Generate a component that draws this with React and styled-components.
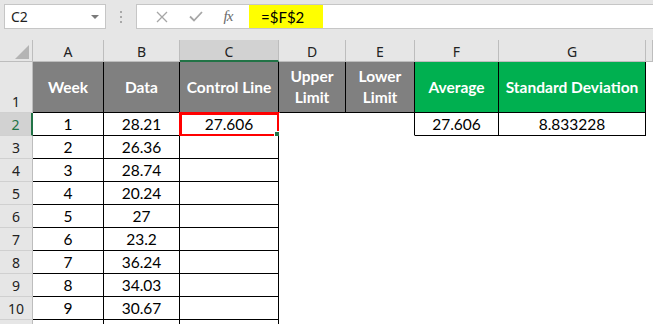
import React from "react";
import styled, { createGlobalStyle } from "styled-components";

const GlobalStyle = createGlobalStyle`
  html, body { margin: 0; padding: 0; background: #ffffff; overflow: hidden; }
  body { width: 653px; height: 324px; font-family: "Lato", "Liberation Sans", sans-serif; }
  * { box-sizing: border-box; }
`;

const COLS = ["A", "B", "C", "D", "E", "F", "G"];
const WIDTHS = "33px 71px 76px 99px 67px 69px 84px 147px 1fr";

const HEADERS = ["Week", "Data", "Control Line", "Upper Limit", "Lower Limit", "Average", "Standard Deviation"];
const WEEKS = [
  ["1", "28.21"],
  ["2", "26.36"],
  ["3", "28.74"],
  ["4", "20.24"],
  ["5", "27"],
  ["6", "23.2"],
  ["7", "36.24"],
  ["8", "34.03"],
  ["9", "30.67"],
  ["", ""],
];

const Page = styled.div`
  width: 653px;
  height: 324px;
  overflow: hidden;
  background: #e6e6e6;
`;

const FormulaBar = styled.div`
  display: flex;
  align-items: flex-start;
  height: 40px;
  padding: 4px 0 0 4px;
`;

const NameBox = styled.div`
  position: relative;
  width: 102px;
  height: 25px;
  background: #fff;
  border: 1px solid #c6c6c6;
  font-family: "Noto Sans", "Open Sans", sans-serif;
  font-size: 14px;
  color: #222;
  padding-left: 6px;
  display: flex;
  align-items: center;
`;

const DropArrow = styled.span`
  position: absolute;
  right: 6px;
  top: 10px;
  width: 0;
  height: 0;
  border-left: 4px solid transparent;
  border-right: 4px solid transparent;
  border-top: 4px solid #7a7a7a;
`;

const Grip = styled.div`
  width: 30px;
  height: 25px;
  display: flex;
  flex-direction: column;
  align-items: center;
  justify-content: center;
  gap: 3px;
  span {
    width: 2px;
    height: 2px;
    background: #a8a8a8;
  }
`;

const ButtonsBox = styled.div`
  width: 113px;
  height: 25px;
  background: #fff;
  border: 1px solid #c6c6c6;
  border-right: none;
  display: flex;
  align-items: center;
  justify-content: space-around;
  padding: 0 6px 0 8px;
`;

const Fx = styled.span`
  font-family: "Liberation Serif", serif;
  font-style: italic;
  font-size: 15px;
  color: #6a6a6a;
  letter-spacing: -1px;
`;

const Highlight = styled.div`
  width: 74px;
  height: 25px;
  background: #ffff00;
  border-top: 1px solid #c6c6c6;
  border-bottom: 1px solid #c6c6c6;
  font-family: "Lato", sans-serif;
  font-size: 15px;
  color: #000;
  padding-left: 12px;
  display: flex;
  align-items: center;
`;

const Input = styled.div`
  flex: 1;
  height: 25px;
  background: #fff;
  border-top: 1px solid #c6c6c6;
  border-bottom: 1px solid #c6c6c6;
`;

const Sheet = styled.div`
  display: grid;
  grid-template-columns: ${WIDTHS};
  grid-template-rows: 22px 51px repeat(10, 23px);
`;

const Corner = styled.div`
  background: #e6e6e6;
  border-right: 1px solid #bdbdbd;
  border-bottom: 1px solid #bdbdbd;
  display: flex;
  align-items: flex-end;
  justify-content: flex-end;
  padding: 0 3px 2px 0;
`;

const ColHead = styled.div`
  background: ${({ $active }) => ($active ? "#d2d2d2" : "#e6e6e6")};
  border-right: 1px solid #bdbdbd;
  border-bottom: ${({ $active }) => ($active ? "2px solid #217346" : "1px solid #bdbdbd")};
  font-family: "Noto Sans", "Open Sans", sans-serif;
  font-size: 14px;
  color: #222;
  display: flex;
  align-items: center;
  justify-content: center;
  padding-top: 2px;
`;

const RowHead = styled.div`
  background: ${({ $active }) => ($active ? "#d2d2d2" : "#e6e6e6")};
  border-right: ${({ $active }) => ($active ? "2px solid #217346" : "1px solid #bdbdbd")};
  border-bottom: 1px solid #d0d0d0;
  font-family: "Noto Sans", "Open Sans", sans-serif;
  font-size: 14px;
  color: ${({ $active }) => ($active ? "#217346" : "#222")};
  display: flex;
  align-items: ${({ $bottom }) => ($bottom ? "flex-end" : "center")};
  justify-content: center;
  padding-bottom: ${({ $bottom }) => ($bottom ? "1px" : "0")};
`;

const Cell = styled.div`
  position: relative;
  background: ${({ $bg }) => $bg || "#fff"};
  border-right: 1px solid ${({ $r }) => ($r ? "#000" : "transparent")};
  border-bottom: 1px solid ${({ $b }) => ($b ? "#000" : "transparent")};
  color: ${({ $head }) => ($head ? "#fff" : "#000")};
  font-weight: ${({ $head }) => ($head ? 700 : 400)};
  font-size: 15.5px;
  line-height: 21px;
  text-align: center;
  display: flex;
  align-items: center;
  justify-content: center;
  white-space: ${({ $wrap }) => ($wrap ? "normal" : "nowrap")};
  padding: 0 2px;
`;

const Selection = styled.span`
  position: absolute;
  left: -1px;
  top: -1px;
  right: -2px;
  bottom: -2px;
  border: 3px solid #ff0000;
  pointer-events: none;
  &::after {
    content: "";
    position: absolute;
    right: -4px;
    bottom: -4px;
    width: 5px;
    height: 5px;
    background: #217346;
    border: 1px solid #fff;
  }
`;

const headBg = (i) => (i >= 5 ? "#00b050" : "#808080");

const rowCells = (rowIndex) => {
  const n = rowIndex + 2;
  const [week, data] = WEEKS[rowIndex];
  if (n === 2) {
    return [
      <Cell key="a" $r $b>{week}</Cell>,
      <Cell key="b" $r $b>{data}</Cell>,
      <Cell key="c" $r $b>27.606<Selection /></Cell>,
      <Cell key="d" />,
      <Cell key="e" $r />,
      <Cell key="f" $r $b>27.606</Cell>,
      <Cell key="g" $r $b>8.833228</Cell>,
      <Cell key="x" />,
    ];
  }
  return [
    <Cell key="a" $r $b>{week}</Cell>,
    <Cell key="b" $r $b>{data}</Cell>,
    <Cell key="c" $r $b />,
    <Cell key="d" />,
    <Cell key="e" />,
    <Cell key="f" />,
    <Cell key="g" />,
    <Cell key="x" />,
  ];
};

const App = () => {
  return (
    <>
      <GlobalStyle />
      <Page>
        <FormulaBar>
          <NameBox>
            C2
            <DropArrow />
          </NameBox>
          <Grip>
            <span />
            <span />
            <span />
          </Grip>
          <ButtonsBox>
            <svg width="12" height="12" viewBox="0 0 12 12">
              <path d="M1 1 L11 11 M11 1 L1 11" stroke="#a6a6a6" strokeWidth="1.3" fill="none" />
            </svg>
            <svg width="14" height="11" viewBox="0 0 14 11">
              <path d="M1 5.5 L5 9.5 L13 1" stroke="#a6a6a6" strokeWidth="1.8" fill="none" />
            </svg>
            <Fx>fx</Fx>
          </ButtonsBox>
          <Highlight>=$F$2</Highlight>
          <Input />
        </FormulaBar>

        <Sheet>
          <Corner>
            <svg width="14" height="14" viewBox="0 0 14 14">
              <polygon points="14,0 14,14 0,14" fill="#b4b4b4" />
            </svg>
          </Corner>
          {COLS.map((c) => (
            <ColHead key={c} $active={c === "C"}>{c}</ColHead>
          ))}
          <ColHead />

          <RowHead $bottom>1</RowHead>
          {HEADERS.map((h, i) => (
            <Cell key={h} $bg={headBg(i)} $head $r $b $wrap={i === 3 || i === 4}>
              {h}
            </Cell>
          ))}
          <Cell />

          {WEEKS.map((_, i) => (
            <React.Fragment key={i}>
              <RowHead $active={i === 0}>{i < WEEKS.length - 1 ? i + 2 : ""}</RowHead>
              {rowCells(i)}
            </React.Fragment>
          ))}
        </Sheet>
      </Page>
    </>
  );
};

export default App;
